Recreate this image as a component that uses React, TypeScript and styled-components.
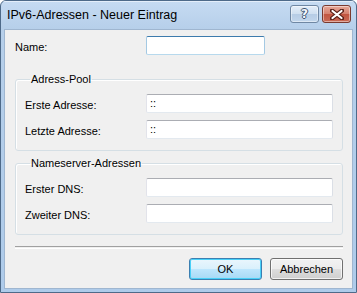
import React from "react";
import styled, { createGlobalStyle } from "styled-components";

const GlobalStyle = createGlobalStyle`
  html, body {
    margin: 0;
    padding: 0;
    background: #ffffff;
  }
  body {
    font-family: "Liberation Sans", Arial, sans-serif;
    font-size: 11px;
    color: #000000;
  }
`;

const Window = styled.div`
  width: 357px;
  height: 293px;
  box-sizing: border-box;
  border: 1px solid #4e6a89;
  border-radius: 6px 6px 0 0;
  background: linear-gradient(#c6dbf2, #b6cfea 28px, #aecbea);
  display: flex;
  flex-direction: column;
  overflow: hidden;
`;

const TitleBar = styled.div`
  height: 28px;
  flex: none;
  display: flex;
  align-items: center;
  padding: 0 5px 0 6px;
  box-shadow: inset 0 1px 0 #e4eefa;
`;

const Title = styled.div`
  flex: 1;
  font-family: "Liberation Sans", Arial, sans-serif;
  font-size: 12.5px;
  color: #000000;
  padding-bottom: 1px;
`;

const CaptionButtons = styled.div`
  display: flex;
  gap: 3px;
  align-self: flex-start;
  margin-top: 4px;
`;

const CaptionButton = styled.div<{ $close?: boolean }>`
  width: 29px;
  height: 18px;
  box-sizing: border-box;
  border: 1px solid ${(p) => (p.$close ? "#7a3a2f" : "#6f87a3")};
  border-radius: 3px;
  background: ${(p) =>
    p.$close
      ? "linear-gradient(#e7a898, #d5806e 50%, #c25540 51%, #c96a56)"
      : "linear-gradient(#e4eef9, #cfdff0 50%, #b6cce5 51%, #c2d6ec)"};
  box-shadow: inset 0 0 0 1px rgba(255, 255, 255, 0.45);
  display: flex;
  align-items: center;
  justify-content: center;
`;

const HelpGlyph = styled.span`
  font-family: "DejaVu Sans", sans-serif;
  font-weight: bold;
  font-size: 12px;
  line-height: 12px;
  color: #f4f8fc;
  text-shadow: -1px 0 #3e5470, 1px 0 #3e5470, 0 -1px #3e5470, 0 1px #3e5470;
`;

const Client = styled.div`
  flex: 1;
  margin: 0 3px 3px 3px;
  background: #f0f0f0;
  border: 1px solid #9fb6d0;
  display: flex;
  flex-direction: column;
  padding: 6px 9px 0 10px;
`;

const Row = styled.div`
  display: flex;
  align-items: center;
  height: 19px;
`;

const Label = styled.label<{ $width: number }>`
  width: ${(p) => p.$width}px;
  flex: none;
  padding-top: 2px;
`;

const TextBox = styled.div<{ $width: number; $focused?: boolean }>`
  width: ${(p) => p.$width}px;
  height: 19px;
  box-sizing: border-box;
  background: #ffffff;
  border: 1px solid;
  border-color: ${(p) =>
    p.$focused
      ? "#3d7bad #a4c9e3 #b7d9ed #a4c9e3"
      : "#abadb3 #dbdfe6 #e3e9ef #e2e3ea"};
  border-radius: 2px;
  padding: 1px 3px;
  font-size: 11px;
  line-height: 15px;
`;

const Group = styled.fieldset<{ $top: number }>`
  margin: ${(p) => p.$top}px 0 0 0;
  padding: 8px 9px 11px 9px;
  border: 1px solid #d5dfe5;
  border-radius: 3px;
  box-shadow: inset 1px 1px 0 #ffffff;
  display: flex;
  flex-direction: column;
  gap: 7px;
`;

const Legend = styled.legend`
  padding: 0 1px;
  margin-left: 5px;
  line-height: 14px;
  font-size: 11px;
`;

const Separator = styled.div`
  margin: 11px 0 0 0;
  height: 1px;
  border-top: 1px solid #a0a0a0;
  border-bottom: 1px solid #ffffff;
`;

const ButtonBar = styled.div`
  display: flex;
  justify-content: flex-end;
  gap: 8px;
  margin-top: 9px;
`;

const PushButton = styled.button<{ $default?: boolean }>`
  width: 73px;
  height: 22px;
  box-sizing: border-box;
  font-family: "Liberation Sans", Arial, sans-serif;
  font-size: 11px;
  color: #000000;
  border: 1px solid ${(p) => (p.$default ? "#3c7fb1" : "#707070")};
  border-radius: 3px;
  background: ${(p) =>
    p.$default
      ? "linear-gradient(#eaf6fd, #d9f0fc 50%, #bee6fd 51%, #a7d9f5)"
      : "linear-gradient(#f2f2f2, #ebebeb 50%, #dddddd 51%, #cfcfcf)"};
  box-shadow: inset 0 0 0 1px
    ${(p) => (p.$default ? "#48d0f8" : "rgba(255,255,255,0.7)")};
  padding: 0;
`;

function CloseGlyph() {
  return (
    <svg width="14" height="11" viewBox="0 0 14 11">
      <path
        d="M2 1.5 L12 9.5 M12 1.5 L2 9.5"
        stroke="#5a2018"
        strokeWidth="4.2"
        strokeLinecap="round"
      />
      <path
        d="M2.5 2 L11.5 9 M11.5 2 L2.5 9"
        stroke="#ffffff"
        strokeWidth="2.2"
        strokeLinecap="round"
      />
    </svg>
  );
}

function Field({
  label,
  labelWidth,
  width,
  value,
  focused,
}: {
  label: string;
  labelWidth: number;
  width: number;
  value?: string;
  focused?: boolean;
}) {
  return (
    <Row>
      <Label $width={labelWidth}>{label}</Label>
      <TextBox $width={width} $focused={focused}>
        {value}
      </TextBox>
    </Row>
  );
}

export default function App() {
  return (
    <>
      <GlobalStyle />
      <Window>
        <TitleBar>
          <Title>IPv6-Adressen - Neuer Eintrag</Title>
          <CaptionButtons>
            <CaptionButton>
              <HelpGlyph>?</HelpGlyph>
            </CaptionButton>
            <CaptionButton $close>
              <CloseGlyph />
            </CaptionButton>
          </CaptionButtons>
        </TitleBar>
        <Client>
          <Field label="Name:" labelWidth={131} width={119} focused />
          <Group $top={17}>
            <Legend>Adress-Pool</Legend>
            <Field label="Erste Adresse:" labelWidth={121} width={187} value="::" />
            <Field label="Letzte Adresse:" labelWidth={121} width={187} value="::" />
          </Group>
          <Group $top={5}>
            <Legend>Nameserver-Adressen</Legend>
            <Field label="Erster DNS:" labelWidth={121} width={187} />
            <Field label="Zweiter DNS:" labelWidth={121} width={187} />
          </Group>
          <Separator />
          <ButtonBar>
            <PushButton $default>OK</PushButton>
            <PushButton>Abbrechen</PushButton>
          </ButtonBar>
        </Client>
      </Window>
    </>
  );
}
